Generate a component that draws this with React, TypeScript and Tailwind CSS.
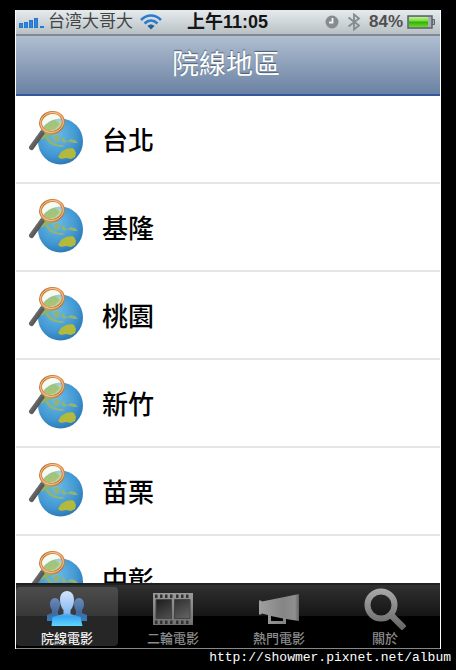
import React from 'react';

const regions = ['台北', '基隆', '桃園', '新竹', '苗栗', '中彰'];

const GlobeIcon: React.FC = () => (
  <svg viewBox="0 0 56 56" className="h-14 w-14 shrink-0" aria-hidden="true">
    <defs>
      <radialGradient id="sea" cx="0.4" cy="0.35" r="0.75">
        <stop offset="0" stopColor="#6cbce8" />
        <stop offset="0.6" stopColor="#4298d2" />
        <stop offset="1" stopColor="#246eaf" />
      </radialGradient>
      <linearGradient id="rim" x1="0" y1="0" x2="1" y2="1">
        <stop offset="0" stopColor="#b8682c" />
        <stop offset="0.5" stopColor="#e29a5c" />
        <stop offset="1" stopColor="#b9672a" />
      </linearGradient>
      <linearGradient id="handle" x1="0" y1="0" x2="1" y2="1">
        <stop offset="0" stopColor="#858585" />
        <stop offset="1" stopColor="#3a3a3a" />
      </linearGradient>
    </defs>
    <ellipse cx="32.500" cy="30.500" rx="22.500" ry="23" fill="url(#sea)" />
    <path d="M12 24c2-7 7-12 14-14 4 0 8 1 11 3l-3 5-5 5-8 2-4 2-5 2z" fill="#8fb466" />
    <path d="M17 27l3-1 3 4 5 3 6 1 3 1-3 1-7-1-5-2z" fill="#8fb477" />
    <path d="M25 27l4-3 3 2-1 4-4 1zM34 27l2-1 1 3 2 1-2 2-3-1zM39 30l4-2 4 1 3 3-4 0-5-1z" fill="#92b374" />
    <path d="M30 46l3-5 5-3 6-1 2 1 2 4-1 4-4 2-5-1-5 1z" fill="#b2b93c" />
    <ellipse cx="24" cy="11.500" rx="11" ry="10" fill="#edf6df" opacity="0.5" />
    <path d="M15 17c3-4 6-7 12-8l5 4-5 5-6 2z" fill="#9bbd6b" opacity="0.75" />
    <path d="M14 22L3.500 36.500" stroke="url(#handle)" strokeWidth="5" strokeLinecap="round" />
    <ellipse cx="24" cy="11.500" rx="11.500" ry="10" fill="none" stroke="url(#rim)" strokeWidth="3" transform="rotate(-12 24 11.500)" />
    <ellipse cx="24" cy="11.500" rx="11.500" ry="10" fill="none" stroke="#fbd0a2" strokeWidth="0.8" transform="rotate(-12 24 11.500)" />
  </svg>
);

const PeopleIcon: React.FC = () => (
  <svg viewBox="0 0 42 36" className="h-9 w-[42px]" aria-hidden="true">
    <defs>
      <linearGradient id="front" x1="0" y1="0" x2="0" y2="36" gradientUnits="userSpaceOnUse">
        <stop offset="0" stopColor="#d4e4fb" />
        <stop offset="0.6" stopColor="#87b9f2" />
        <stop offset="0.7" stopColor="#3aa2ef" />
        <stop offset="1" stopColor="#62dcff" />
      </linearGradient>
      <linearGradient id="back" x1="0" y1="0" x2="0" y2="36" gradientUnits="userSpaceOnUse">
        <stop offset="0" stopColor="#7c9cc9" />
        <stop offset="0.6" stopColor="#44699c" />
        <stop offset="1" stopColor="#1c91d9" />
      </linearGradient>
    </defs>
    <path d="M9 7c3 0 5 3 5 6 0 3-1 5-2 7v3l4 3v4H1v-6l5-2v-3c-1-2-2-3-2-6 0-3 2-6 5-6z" fill="url(#back)" />
    <path d="M33 7c3 0 5 3 5 6 0 3-1 5-2 6v3l5 2v6H26v-4l4-3v-3c-1-2-2-4-2-7 0-3 2-6 5-6z" fill="url(#back)" />
    <path d="M21 0c4.500 0 7 3.500 7 9 0 4-1.500 8-3.500 10v4l10 3 2 9H5.500l1-9 11-3v-4c-2-2-3.500-6-3.500-10 0-5.500 2.500-9 7-9z" fill="url(#front)" />
  </svg>
);

const holes = [3, 8, 13, 18, 24, 29, 34];

const FilmIcon: React.FC = () => (
  <svg viewBox="0 0 42 36" className="h-9 w-[42px]" aria-hidden="true">
    <defs>
      <linearGradient id="film" x1="0" y1="0" x2="0" y2="1">
        <stop offset="0" stopColor="#9a9a9a" />
        <stop offset="1" stopColor="#707070" />
      </linearGradient>
      <linearGradient id="cell" x1="0" y1="0" x2="1" y2="1">
        <stop offset="0" stopColor="#1c1c1c" />
        <stop offset="1" stopColor="#656565" />
      </linearGradient>
    </defs>
    <path d="M1 2h40v32H1z" fill="url(#film)" />
    <path d="M4 8.500h15.500v19H4zM22.500 8.500H38v19H22.500z" fill="url(#cell)" stroke="#444" />
    {holes.map((x) => (
      <path key={x} d={`M${x} 3.500h2.500v3.500h-2.500zM${x} 29.500h2.500v3.500h-2.500z`} fill="#333" />
    ))}
  </svg>
);

const MegaphoneIcon: React.FC = () => (
  <svg viewBox="0 0 42 36" className="h-9 w-[42px]" aria-hidden="true">
    <defs>
      <linearGradient id="horn" x1="0" y1="0" x2="1" y2="0">
        <stop offset="0" stopColor="#a0a0a0" />
        <stop offset="0.6" stopColor="#858585" />
        <stop offset="0.9" stopColor="#8f8f8f" />
        <stop offset="1" stopColor="#636363" />
      </linearGradient>
    </defs>
    <path
      d="M1 9.500h2l1 1 37-7.500v27L28 28v5H10v-9L4 22.500l-1 1H1zM13 25v5h12v-2.500z"
      fill="url(#horn)"
      fillRule="evenodd"
    />
  </svg>
);

const SearchIcon: React.FC = () => (
  <svg viewBox="0 0 42 42" className="h-[42px] w-[42px]" aria-hidden="true">
    <defs>
      <linearGradient id="lens" x1="0" y1="0" x2="0" y2="42" gradientUnits="userSpaceOnUse">
        <stop offset="0" stopColor="#aaa" />
        <stop offset="1" stopColor="#656565" />
      </linearGradient>
    </defs>
    <path d="M27 27l11 11" stroke="url(#lens)" strokeWidth="6.500" strokeLinecap="square" />
    <circle cx="17" cy="17" r="13.500" fill="none" stroke="url(#lens)" strokeWidth="6" />
  </svg>
);

const tabs = [
  { label: '院線電影', Icon: PeopleIcon, active: true },
  { label: '二輪電影', Icon: FilmIcon, active: false },
  { label: '熱門電影', Icon: MegaphoneIcon, active: false },
  { label: '關於', Icon: SearchIcon, active: false },
];

const StatusBar: React.FC = () => (
  <div className="grid h-[26px] grid-cols-[1fr_auto_1fr] items-center border-b-2 border-[#7d8995] bg-linear-to-b from-[#e6ebed] to-[#b9c1c5] pl-[3px] pr-1">
    <div className="flex items-center gap-[3px]">
      <svg viewBox="0 0 26 14" className="h-3.5 w-[26px]" aria-label="訊號">
        <path d="M0 8h4v5H0zM5 7h4v6H5zM10 5h4v8h-4zM15 3h4v10h-4zM21 11h4v2h-4z" fill="#2678cf" />
        <path d="M1 9h2v3H1zM6 8h2v4H6zM11 6h2v6h-2zM16 4h2v8h-2z" fill="#3184dc" />
      </svg>
      <span className="whitespace-nowrap font-['Liberation_Sans','Noto_Sans_CJK_SC',sans-serif] text-[17px] leading-6 text-[#444]">台湾大哥大</span>
      <svg viewBox="0 0 22 16" className="ml-1 h-4 w-[22px]" fill="none" stroke="#2b7ccd" strokeWidth="2.600" aria-label="Wi-Fi">
        <path d="M1 6c6-6 14-6 20 0" />
        <path d="M4.500 9.500c4-4 9-4 13 0" />
        <path d="M7.500 12c2-2 5-2 7 0L11 15.500z" fill="#245f9f" stroke="none" />
      </svg>
    </div>
    <span className="whitespace-nowrap font-['Liberation_Sans','Noto_Sans_CJK_TC',sans-serif] text-lg leading-6 font-bold text-[#151515]">上午11:05</span>
    <div className="flex items-center justify-end gap-1">
      <svg viewBox="0 0 14 14" className="mr-1 h-3.5 w-3.5" aria-label="鬧鐘">
        <circle cx="7" cy="7" r="6.500" fill="#858b8e" />
        <path d="M7.500 3v4.500H4" fill="none" stroke="#f1f3f4" strokeWidth="1.800" />
      </svg>
      <svg viewBox="0 0 14 18" className="mr-1 h-[18px] w-3.5" fill="none" stroke="#858b8e" strokeWidth="1.800" aria-label="藍牙">
        <path d="M1.500 4.500l10.500 8-5 4V1.500l5 4-10.500 8" />
      </svg>
      <span className="font-['Liberation_Sans',sans-serif] text-[17px] leading-6 font-bold text-[#505050]">84%</span>
      <svg viewBox="0 0 29 14" className="h-3.5 w-[29px]" aria-label="電池">
        <defs>
          <linearGradient id="charge" x1="0" y1="0" x2="0" y2="1">
            <stop offset="0" stopColor="#bef18e" />
            <stop offset="0.4" stopColor="#75dc3e" />
            <stop offset="0.5" stopColor="#2fb007" />
            <stop offset="1" stopColor="#68db27" />
          </linearGradient>
        </defs>
        <path d="M25 4.500h2.500v5H25z" fill="#a9afb3" stroke="#59616a" />
        <path d="M1 1h24v12H1z" fill="#a9afb3" stroke="#59616a" strokeWidth="1.500" />
        <path d="M2 2h19v10H2z" fill="url(#charge)" />
      </svg>
    </div>
  </div>
);

const App: React.FC = () => {
  return (
    <div className="flex h-screen flex-col bg-black px-[15px] pt-2.5">
      <main className="flex min-h-0 flex-1 flex-col overflow-hidden border-x border-white bg-white">
        <StatusBar />
        <header className="flex h-[60px] shrink-0 items-center justify-center border-b-2 border-[#36559c] bg-linear-to-b from-[#b0bed0] to-[#6b82a3] pr-1 pb-1">
          <h1 className="font-['Noto_Sans_CJK_TC',sans-serif] text-[27px] leading-8 text-white [text-shadow:0_-1px_1px_#4d5c70]">院線地區</h1>
        </header>
        <ul className="min-h-0 flex-1 overflow-hidden">
          {regions.map((name) => (
            <li key={name} className="h-[88px] border-b-2 border-[#e5e5e5]">
              <button type="button" className="flex h-full w-full items-center gap-[18px] pl-3 text-left">
                <GlobeIcon />
                <span className="font-['Noto_Sans_CJK_TC',sans-serif] text-[26px] leading-8 font-medium text-black">{name}</span>
              </button>
            </li>
          ))}
        </ul>
        <nav className="grid h-[66px] shrink-0 grid-cols-4 border-t-2 border-b border-t-[#202020] border-b-[#888] bg-[linear-gradient(#303030,#151515_50%,#000_50%)]">
          {tabs.map(({ label, Icon, active }) => (
            <button
              key={label}
              type="button"
              className={
                active
                  ? 'my-0.5 mr-1 flex flex-col items-center justify-between rounded bg-white/15 pt-1 text-[#f2f2f2]'
                  : 'my-0.5 mr-1 flex flex-col items-center justify-between rounded pt-1 text-[#8b8b8b]'
              }
            >
              <span className="flex h-9 items-center">
                <Icon />
              </span>
              <span className="font-['Noto_Sans_CJK_TC',sans-serif] text-[13px] leading-4 font-medium">{label}</span>
            </button>
          ))}
        </nav>
      </main>
      <footer className="-mr-2.5 h-[21px] text-right font-['Liberation_Mono',monospace] text-[13px] leading-[18px] text-white">
        <a href="http://showmer.pixnet.net/album">http://showmer.pixnet.net/album</a>
      </footer>
    </div>
  );
};

export default App;
